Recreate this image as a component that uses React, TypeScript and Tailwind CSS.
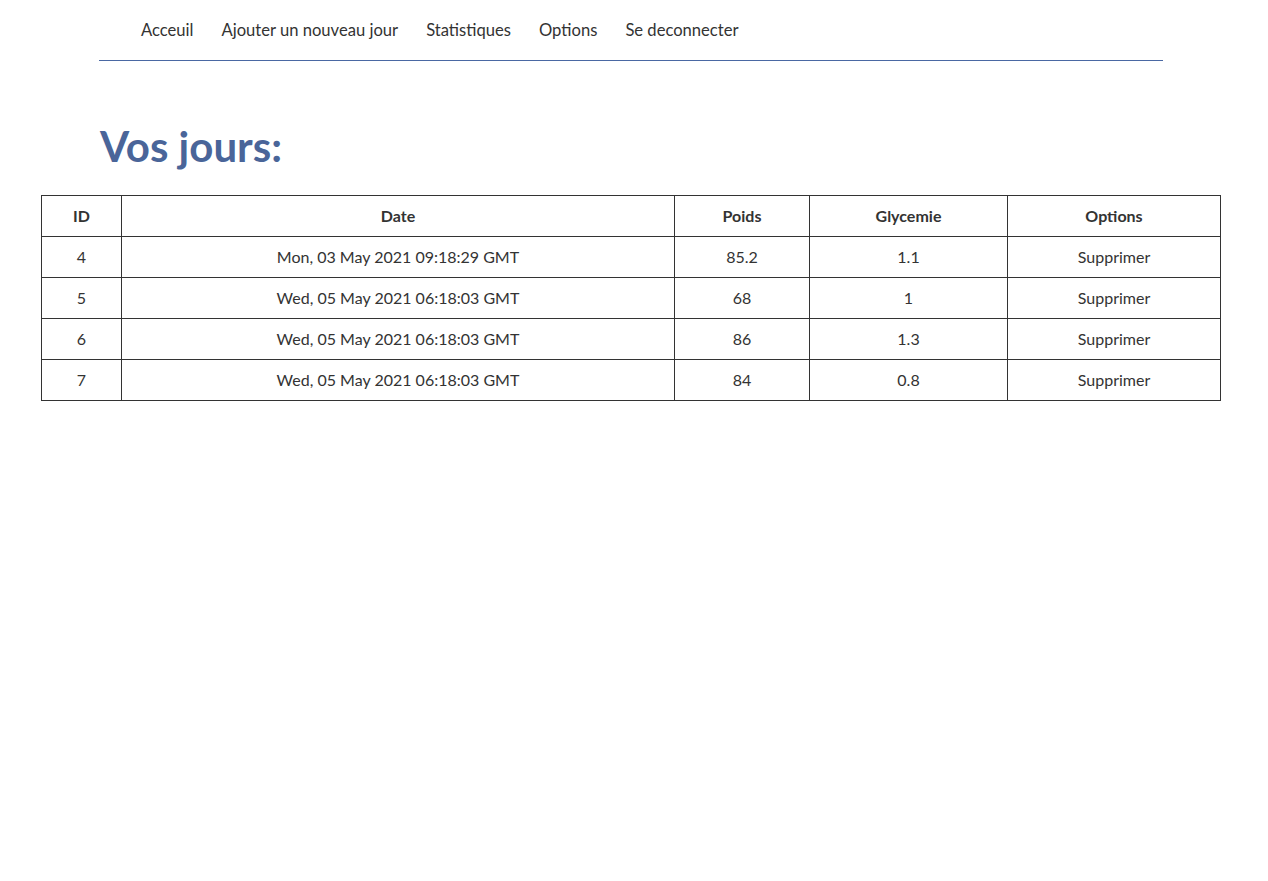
const rows = [
  { id: 4, date: "Mon, 03 May 2021 09:18:29 GMT", poids: "85.2", gly: "1.1" },
  { id: 5, date: "Wed, 05 May 2021 06:18:03 GMT", poids: "68", gly: "1" },
  { id: 6, date: "Wed, 05 May 2021 06:18:03 GMT", poids: "86", gly: "1.3" },
  { id: 7, date: "Wed, 05 May 2021 06:18:03 GMT", poids: "84", gly: "0.8" },
];

const links = ["Acceuil", "Ajouter un nouveau jour", "Statistiques", "Options", "Se deconnecter"];

export default function App() {
  return (
    <div className="min-h-[881px] bg-white text-[#333] font-['Lato','Noto_Sans',sans-serif]">
      <nav className="ml-[99px] mr-[105px] border-b border-[#4a68a3]">
        <ul className="flex h-[60px] items-center gap-7 pl-[42px] text-[16.6px]">
          {links.map((l) => (
            <li key={l}>
              <a href="#" className="text-[#333]">{l}</a>
            </li>
          ))}
        </ul>
      </nav>

      <h1 className="ml-[100px] mt-[64px] text-[42px] font-bold leading-none text-[#4a6599]">
        Vos jours:
      </h1>

      <table className="ml-[41px] mt-[28px] w-[1179px] table-fixed border-collapse border border-[#333] text-base">
        <colgroup>
          <col className="w-[80px]" />
          <col className="w-[553px]" />
          <col className="w-[135px]" />
          <col className="w-[198px]" />
          <col className="w-[213px]" />
        </colgroup>
        <thead>
          <tr className="h-[41px]">
            {["ID", "Date", "Poids", "Glycemie", "Options"].map((h) => (
              <th key={h} className="border border-[#333] text-center font-bold">{h}</th>
            ))}
          </tr>
        </thead>
        <tbody>
          {rows.map((r) => (
            <tr key={r.id} className="h-[41px]">
              <td className="border border-[#333] text-center">{r.id}</td>
              <td className="border border-[#333] text-center">{r.date}</td>
              <td className="border border-[#333] text-center">{r.poids}</td>
              <td className="border border-[#333] text-center">{r.gly}</td>
              <td className="border border-[#333] text-center">Supprimer</td>
            </tr>
          ))}
        </tbody>
      </table>
    </div>
  );
}
